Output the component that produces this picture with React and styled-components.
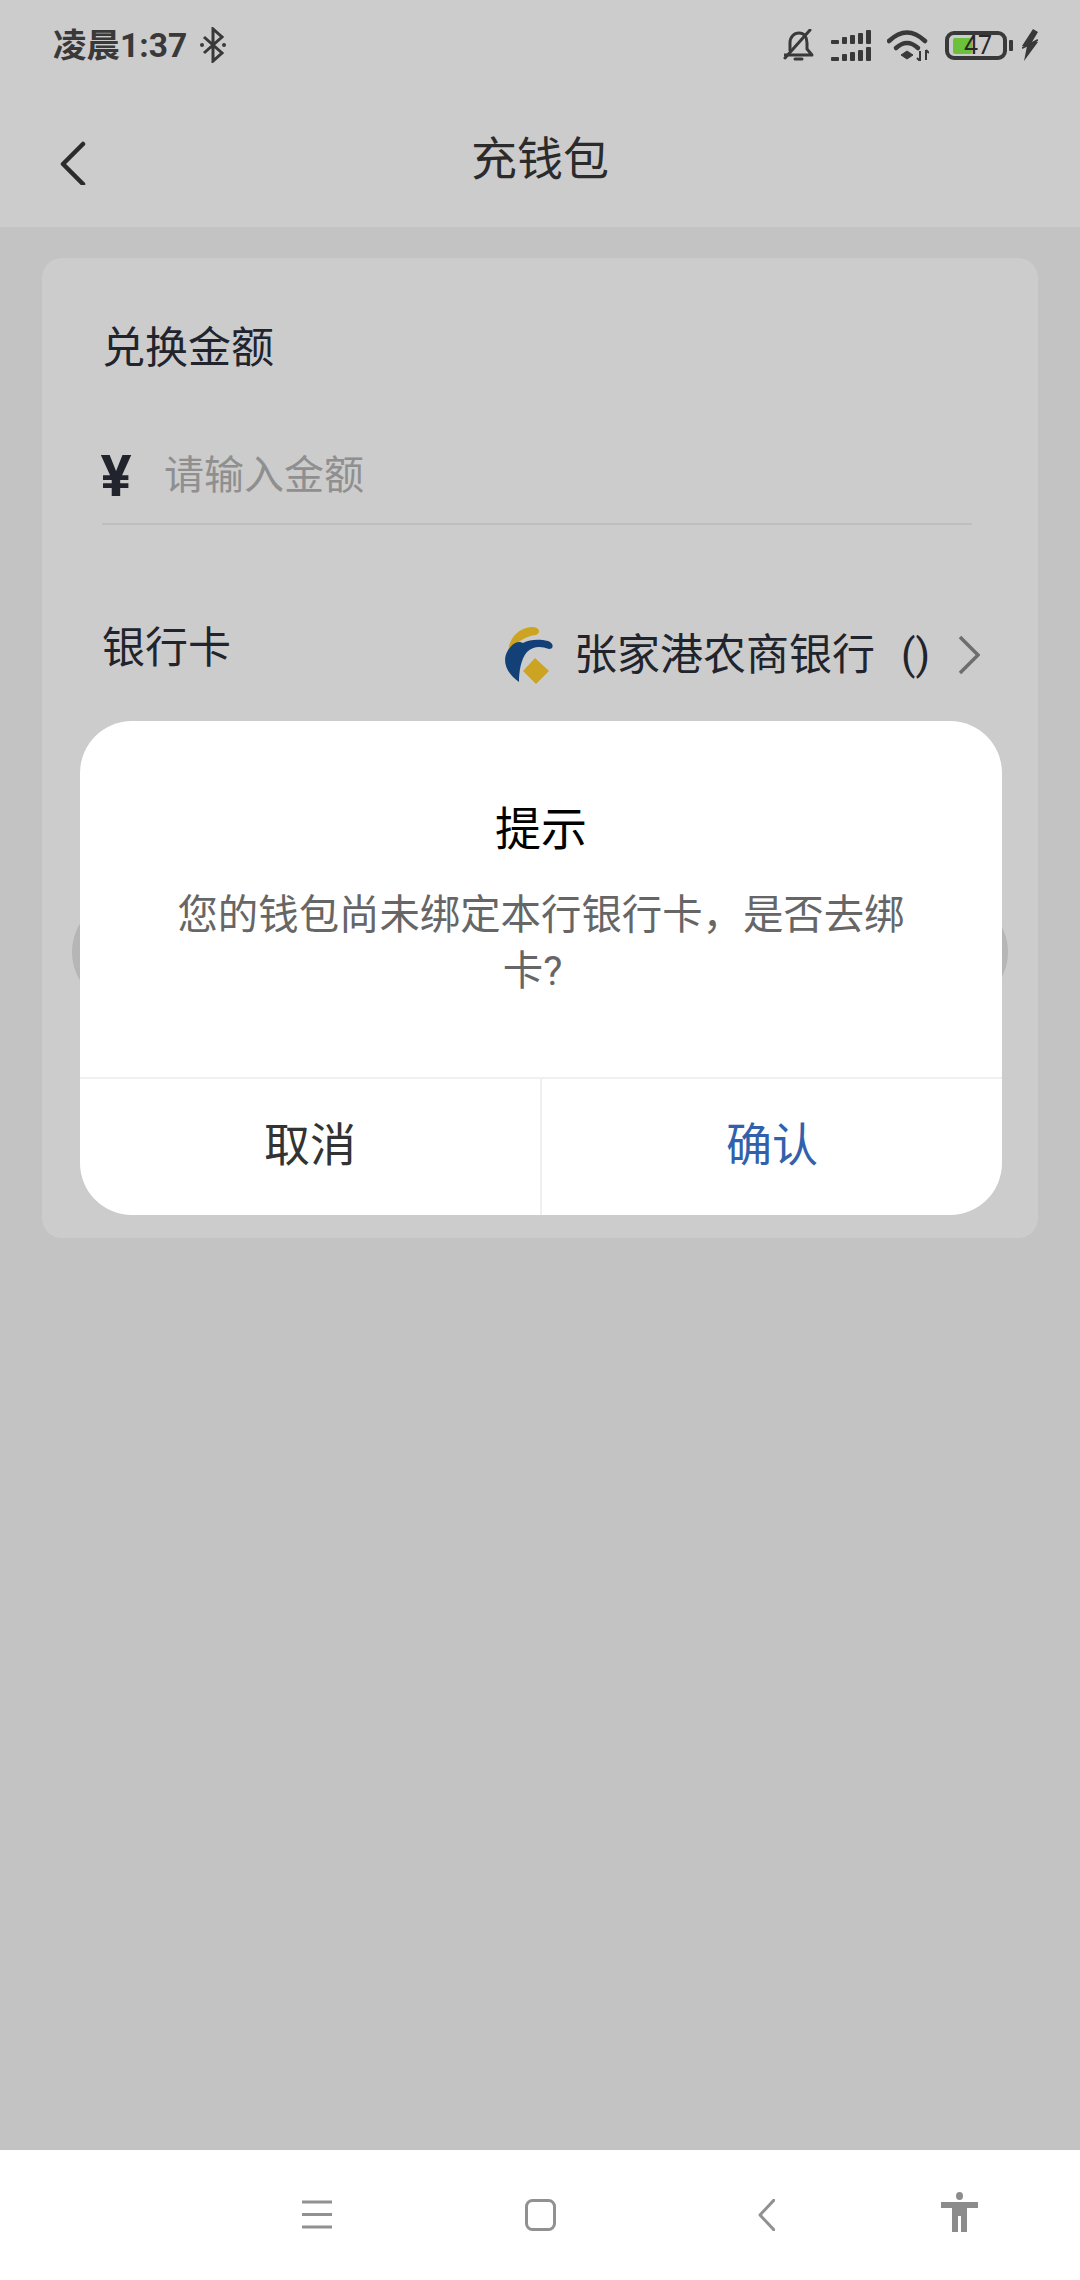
import styled, { createGlobalStyle } from "styled-components";

const GlobalStyle = createGlobalStyle`
    html, body {
        margin: 0;
        padding: 0;
        background: #fff;
    }
    body {
        font-family: Roboto, "Noto Sans CJK SC", sans-serif;
    }
    * {
        box-sizing: border-box;
    }
`

const Tela = styled.div`
    width: 1080px;
    height: 2280px;
    display: flex;
    flex-direction: column;
    overflow: hidden;
`

const Pagina = styled.main`
    flex: 1;
    position: relative;
    background-color: #f4f4f4;
`

const Topo = styled.header`
    height: 227px;
    background-color: #fff;
    display: flex;
    flex-direction: column;
`

const BarraStatus = styled.div`
    height: 90px;
    padding: 0 42px 0 53px;
    display: flex;
    align-items: center;
    justify-content: space-between;
`

const StatusEsquerda = styled.div`
    display: flex;
    align-items: center;
    gap: 12px;
`

const Hora = styled.span`
    font-size: 33.5px;
    line-height: 40px;
    padding-top: 2px;
    font-weight: 700;
    color: #484848;
`

const StatusDireita = styled.div`
    display: flex;
    align-items: center;
    gap: 16px;
`

const Bateria = styled.div`
    position: relative;
    width: 68px;
    height: 29px;
    margin-right: -7px;
`

const BateriaNumero = styled.span`
    position: absolute;
    left: 19px;
    top: 0;
    width: 28px;
    text-align: center;
    font-size: 25px;
    line-height: 29px;
    color: #333;
`

const Navegacao = styled.div`
    flex: 1;
    position: relative;
    display: flex;
    align-items: center;
    justify-content: center;
`

const Voltar = styled.svg`
    position: absolute;
    left: 60px;
    top: 51px;
`

const Titulo = styled.h1`
    margin: 0;
    font-size: 46px;
    line-height: 60px;
    font-weight: 400;
    color: #363636;
`

const Cartao = styled.section`
    margin: 31px 42px 0;
    height: 980px;
    padding: 60px 66px 0 60px;
    background-color: #fff;
    border-radius: 20px;
`

const Rotulo = styled.div`
    font-size: 43px;
    line-height: 60px;
    color: #2a2e38;
`

const CampoValor = styled.div`
    margin-top: 47px;
    height: 100px;
    display: flex;
    align-items: center;
    gap: 32px;
    padding-top: 4px;
    border-bottom: 2px solid #efefef;
`

const Moeda = styled.span`
    width: 32px;
    font-size: 58px;
    line-height: 60px;
    font-weight: 700;
    color: #2a2e38;
    text-align: center;
    margin-left: -2px;
`

const Placeholder = styled.span`
    font-size: 40px;
    line-height: 60px;
    color: #b3b3b3;
`

const LinhaBanco = styled.div`
    margin-top: 93px;
    display: flex;
    justify-content: space-between;
    align-items: flex-start;
`

const BancoInfo = styled.div`
    display: flex;
    align-items: center;
    padding-top: 7px;
    margin-right: -8px;
`

const BancoNome = styled.span`
    margin-left: 20px;
    font-size: 43px;
    line-height: 60px;
    color: #2a2e38;
`

const BancoNumero = styled.span`
    margin-left: 26px;
    font-size: 42px;
    line-height: 60px;
    color: #2a2e38;
`

const Seta = styled.svg`
    margin-left: 28px;
`

const BotaoRecarga = styled.div`
    margin: 212px -36px 0 -30px;
    height: 110px;
    border-radius: 55px;
    background-color: #e4e4e4;
`

const Mascara = styled.div`
    position: absolute;
    inset: 0;
    background-color: rgba(0, 0, 0, 0.2);
`

const Dialogo = styled.div`
    position: absolute;
    left: 80px;
    top: 721px;
    width: 922px;
    height: 494px;
    display: flex;
    flex-direction: column;
    background-color: #fff;
    border-radius: 52px;
    overflow: hidden;
`

const DialogoTitulo = styled.h2`
    margin: 78px 0 0;
    font-size: 46px;
    line-height: 60px;
    font-weight: 400;
    color: #000;
    text-align: center;
`

const DialogoTexto = styled.p`
    flex: 1;
    margin: 29px 0 0;
    padding: 0 90px;
    font-size: 40.4px;
    line-height: 56px;
    color: #666;
    text-align: center;
`

const FimTexto = styled.span`
    margin-right: 17px;
`

const DialogoAcoes = styled.div`
    height: 138px;
    display: flex;
    border-top: 2px solid #f0f0f0;
`

const DialogoBotao = styled.button`
    flex: 1;
    padding: 0 0 12px;
    background: transparent;
    border: none;
    border-left: ${({ $separado }) => ($separado ? "2px solid #f0f0f0" : "none")};
    font-family: inherit;
    font-size: 46px;
    color: ${({ $cor }) => $cor};
`

const BarraSistema = styled.nav`
    height: 130px;
    padding: 32px 0 0 302px;
    background-color: #fff;
    display: flex;
    align-items: flex-start;
`

const IconeSistema = styled.svg`
    display: block;
    margin-left: ${({ $recuo }) => $recuo || 0}px;
    margin-top: ${({ $topo }) => $topo || 0}px;
`

function IconeBluetooth() {
    return (
        <svg width="30" height="36" viewBox="0 0 30 36" fill="none">
            <path d="M5 10l18 16-9 8V2l9 8L5 26" stroke="#484848" strokeWidth="3" />
            <circle cx="3" cy="18" r="2" fill="#484848" />
            <circle cx="25" cy="18" r="2" fill="#484848" />
        </svg>
    )
}

function IconeSino() {
    return (
        <svg width="33" height="32" viewBox="0 0 33 32" fill="none" stroke="#484848" strokeWidth="3">
            <path d="M8 22V14C8 8 12 4 17 4C22 4 25 8 25 14V20L30 26H2" strokeLinejoin="round" />
            <path d="M3 29L28 1" strokeLinecap="round" />
            <path d="M13 30H20" strokeLinecap="round" />
        </svg>
    )
}

function IconeSinal() {
    const barras = [[0, 8, 4], [11, 5, 7], [19, 5, 9], [27, 5, 11], [35, 5, 14]]
    return (
        <svg width="40" height="31" viewBox="0 0 40 31" fill="#484848">
            {barras.map(([x, l, a]) => (
                <g key={x}>
                    <rect x={x} y={14 - a} width={l} height={a} rx="1" />
                    <rect x={x} y={31 - a} width={l} height={a} rx="1" />
                </g>
            ))}
        </svg>
    )
}

function IconeWifi() {
    return (
        <svg width="42" height="31" viewBox="0 0 42 31" fill="none" stroke="#484848" strokeWidth="4.5">
            <path d="M2 11Q20 -6 38 11" strokeLinecap="round" />
            <path d="M9 18Q20 8 31 18" strokeLinecap="round" />
            <path d="M14 25L20 21L26 25L20 29Z" fill="#484848" strokeWidth="1" />
            <path d="M33 21V31M30 28L33 31M39 20V30M39 20L42 23" strokeWidth="2" />
        </svg>
    )
}

function IconeBateria() {
    return (
        <svg width="68" height="29" viewBox="0 0 68 29" fill="none">
            <rect x="2" y="2" width="58" height="25" rx="7" stroke="#484848" strokeWidth="4" />
            <rect x="8" y="7" width="19" height="16" rx="2" fill="#87f249" />
            <rect x="64" y="9" width="4" height="11" rx="1" fill="#484848" />
        </svg>
    )
}

function IconeRaio() {
    return (
        <svg width="16" height="32" viewBox="0 0 16 32" fill="#484848">
            <path d="M11 0L0 17H5L2 32L16 13H10L16 3Z" />
            <path d="M0 19L16 11" stroke="#484848" strokeWidth="2" />
        </svg>
    )
}

function LogoBanco() {
    return (
        <svg width="50" height="58" viewBox="0 0 50 58">
            <path d="M4 27C5 12 14 2 28 1C36 1 37 7 32 9C22 10 12 16 4 27Z" fill="#ffce2a" />
            <path d="M15 56C3 48 -2 36 3 26C8 17 14 14 19 17C26 13 36 13 44 15C50 17 50 23 45 23C37 20 29 20 23 26C17 33 15 45 15 56Z" fill="#175095" />
            <path d="M31 32L45 45L32 58L19 45Z" fill="#ffce2a" />
        </svg>
    )
}

export default function App() {
    return (
        <Tela>
            <GlobalStyle />
            <Pagina>
                <Topo>
                    <BarraStatus>
                        <StatusEsquerda>
                            <Hora>凌晨1:37</Hora>
                            <IconeBluetooth />
                        </StatusEsquerda>
                        <StatusDireita>
                            <IconeSino />
                            <IconeSinal />
                            <IconeWifi />
                            <Bateria>
                                <IconeBateria />
                                <BateriaNumero>47</BateriaNumero>
                            </Bateria>
                            <IconeRaio />
                        </StatusDireita>
                    </BarraStatus>
                    <Navegacao>
                        <Voltar width="26" height="44" viewBox="0 0 26 44" fill="none">
                            <path d="M23 3L3 23L23 43" stroke="#363636" strokeWidth="4.5" strokeLinecap="round" strokeLinejoin="round" />
                        </Voltar>
                        <Titulo>充钱包</Titulo>
                    </Navegacao>
                </Topo>
                <Cartao>
                    <Rotulo>兑换金额</Rotulo>
                    <CampoValor>
                        <Moeda>¥</Moeda>
                        <Placeholder>请输入金额</Placeholder>
                    </CampoValor>
                    <LinhaBanco>
                        <Rotulo>银行卡</Rotulo>
                        <BancoInfo>
                            <LogoBanco />
                            <BancoNome>张家港农商银行</BancoNome>
                            <BancoNumero>()</BancoNumero>
                            <Seta width="22" height="40" viewBox="0 0 22 40" fill="none">
                                <path d="M2 2L20 20L2 38" stroke="#8a8a8a" strokeWidth="3.5" />
                            </Seta>
                        </BancoInfo>
                    </LinhaBanco>
                    <BotaoRecarga />
                </Cartao>
                <Mascara />
                <Dialogo>
                    <DialogoTitulo>提示</DialogoTitulo>
                    <DialogoTexto>您的钱包尚未绑定本行银行卡，是否去绑<FimTexto>卡?</FimTexto></DialogoTexto>
                    <DialogoAcoes>
                        <DialogoBotao $cor="#333">取消</DialogoBotao>
                        <DialogoBotao $cor="#3261ac" $separado>确认</DialogoBotao>
                    </DialogoAcoes>
                </Dialogo>
            </Pagina>
            <BarraSistema>
                <IconeSistema width="30" height="30" viewBox="0 0 30 30" $topo={18}>
                    <path d="M0 2H30M0 14.5H30M0 27H30" stroke="#919191" strokeWidth="3" strokeLinejoin="round" />
                </IconeSistema>
                <IconeSistema width="31" height="32" viewBox="0 0 31 32" fill="none" $recuo={193} $topo={17}>
                    <rect x="1.5" y="1.5" width="28" height="29" rx="6" stroke="#919191" strokeWidth="3" />
                </IconeSistema>
                <IconeSistema width="17" height="32" viewBox="0 0 17 32" fill="none" $recuo={202} $topo={17}>
                    <path d="M16 1L2 16L16 31" stroke="#919191" strokeWidth="3" strokeLinecap="round" strokeLinejoin="round" />
                </IconeSistema>
                <IconeSistema width="37" height="40" viewBox="0 0 37 40" fill="#8c8c8c" $recuo={166} $topo={10}>
                    <ellipse cx="18.5" cy="4" rx="3.5" ry="4" />
                    <path d="M0 10H37V16H26V40H20V24H17V40H11V16H0Z" />
                </IconeSistema>
            </BarraSistema>
        </Tela>
    )
}
